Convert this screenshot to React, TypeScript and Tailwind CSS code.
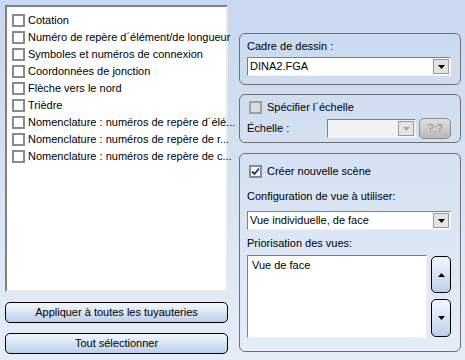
const font = { fontFamily: "'Liberation Sans', Arial, sans-serif" }

const layers = [
  "Cotation",
  "Numéro de repère d´élément/de longueur",
  "Symboles et numéros de connexion",
  "Coordonnées de jonction",
  "Flèche vers le nord",
  "Trièdre",
  "Nomenclature : numéros de repère d´élé...",
  "Nomenclature : numéros de repère de r...",
  "Nomenclature : numéros de repère de c...",
]

function Check({ checked, disabled }: { checked?: boolean; disabled?: boolean }) {
  return (
    <span
      className={
        "flex h-[13px] w-[13px] shrink-0 items-center justify-center border-2 " +
        (disabled ? "border-[#a0a0a0] bg-[#dcdcdc]" : "border-[#8a8a8a] bg-white")
      }
    >
      {checked && (
        <svg width="9" height="9" viewBox="0 0 9 9">
          <path d="M1 4.5 L3.5 7 L8 1.5" fill="none" stroke="#1c2a8c" strokeWidth="1.8" />
        </svg>
      )}
    </span>
  )
}

function Arrow({ up, color = "#000" }: { up?: boolean; color?: string }) {
  return (
    <svg width="7" height="4" viewBox="0 0 7 4">
      <path d={up ? "M0 4 L3.5 0 L7 4 Z" : "M0 0 L7 0 L3.5 4 Z"} fill={color} />
    </svg>
  )
}

function Combo({ value, width, disabled }: { value?: string; width: string; disabled?: boolean }) {
  return (
    <div
      className={
        "flex h-[19px] items-center border border-t-[#808080] border-l-[#808080] border-r-[#f0f0f0] border-b-[#f0f0f0] " +
        width +
        (disabled ? " bg-[#f2f2f2]" : " bg-white")
      }
    >
      <span className="flex-1 truncate pl-[2px] text-[11px] leading-[13px] text-black">{value}</span>
      <span className="mr-[1px] flex h-[15px] w-[16px] items-center justify-center border border-[#9a9a9a] bg-[#e4e4e4]">
        <Arrow color={disabled ? "#a8a8a8" : "#000"} />
      </span>
    </div>
  )
}

function Group({ className, children }: { className: string; children: React.ReactNode }) {
  return (
    <div className={"flex flex-col rounded-[6px] border border-[#707070] px-[7px] " + className}>
      {children}
    </div>
  )
}

function Btn({ label }: { label: string }) {
  return (
    <button
      className="h-[21px] w-[223px] rounded-[5px] border border-black bg-gradient-to-b from-[#f4f8fd] to-[#bccfe9] text-[11px] leading-[13px] text-black"
      style={font}
    >
      {label}
    </button>
  )
}

export default function App() {
  return (
    <div
      className="flex h-[360px] w-[465px] bg-gradient-to-b from-[#c8d8ee] to-[#e6edf7] text-[11px] leading-[13px] text-black"
      style={font}
    >
      {/* left column */}
      <div className="flex w-[239px] flex-col pl-[5px] pt-[5px]">
        <div className="h-[287px] w-[223px] border-2 border-t-[#808080] border-l-[#808080] border-r-[#e8e8e8] border-b-[#e8e8e8] bg-white pt-[5px]">
          {layers.map((l) => (
            <div key={l} className="flex h-[17px] items-center gap-[3px] pl-[5px] whitespace-nowrap">
              <Check />
              <span>{l}</span>
            </div>
          ))}
        </div>
        <div className="mt-[10px]">
          <Btn label="Appliquer à toutes les tuyauteries" />
        </div>
        <div className="mt-[10px]">
          <Btn label="Tout sélectionner" />
        </div>
      </div>

      {/* right column */}
      <div className="flex w-[222px] flex-col pt-[33px]">
        <Group className="h-[52px] pt-[6px]">
          <span>Cadre de dessin :</span>
          <div className="mt-[4px]">
            <Combo value="DINA2.FGA" width="w-[204px]" />
          </div>
        </Group>

        <Group className="mt-[9px] h-[49px] pt-[6px]">
          <div className="flex items-center gap-[5px] pl-[2px]">
            <Check disabled />
            <span>Spécifier l´échelle</span>
          </div>
          <div className="mt-[4px] flex items-center">
            <span className="w-[80px]">Échelle :</span>
            <Combo width="w-[89px]" disabled />
            <span className="ml-[3px] flex h-[21px] w-[32px] items-center justify-center rounded-[5px] border border-[#8c8c8c] bg-gradient-to-b from-[#e0e0e0] to-[#b8b8b8] text-[#909090]">
              ?:?
            </span>
          </div>
        </Group>

        <Group className="mt-[10px] h-[199px] pt-[11px]">
          <div className="flex items-center gap-[5px] pl-[2px]">
            <Check checked />
            <span>Créer nouvelle scène</span>
          </div>
          <span className="mt-[12px]">Configuration de vue à utiliser:</span>
          <div className="mt-[8px]">
            <Combo value="Vue individuelle, de face" width="w-[204px]" />
          </div>
          <span className="mt-[7px]">Priorisation des vues:</span>
          <div className="mt-[5px] flex">
            <div className="h-[83px] w-[180px] border border-t-[#808080] border-l-[#808080] border-r-[#f0f0f0] border-b-[#f0f0f0] bg-white pl-[4px] pt-[3px]">
              Vue de face
            </div>
            <div className="ml-[4px] flex flex-col pt-[1px]">
              <span className="flex h-[37px] w-[20px] items-center justify-center rounded-[5px] border border-black bg-gradient-to-b from-[#f4f8fd] to-[#bccfe9]">
                <Arrow up />
              </span>
              <span className="mt-[6px] flex h-[38px] w-[20px] items-center justify-center rounded-[5px] border border-black bg-gradient-to-b from-[#f4f8fd] to-[#bccfe9]">
                <Arrow />
              </span>
            </div>
          </div>
        </Group>
      </div>
    </div>
  )
}
